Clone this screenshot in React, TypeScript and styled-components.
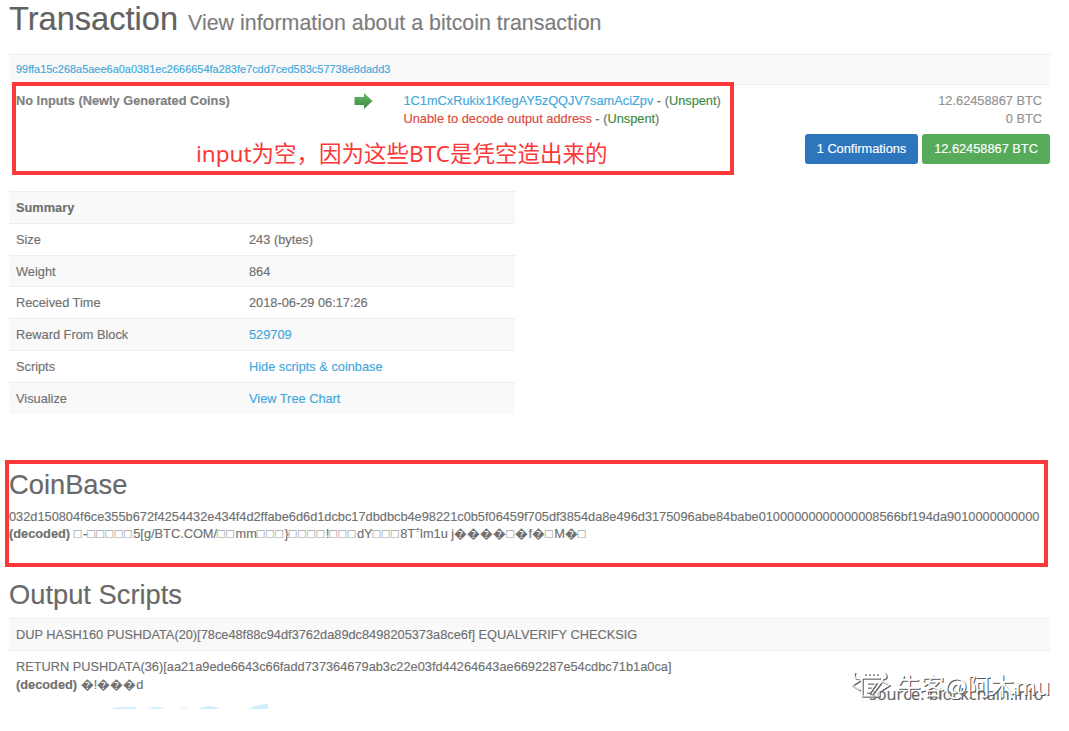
import styled, { createGlobalStyle } from "styled-components";

const GlobalStyle = createGlobalStyle`
  * {
    box-sizing: border-box;
  }
  body {
    margin: 0;
    background-color: #fff;
    color: #707070;
    font-family: "Liberation Sans", Arial, sans-serif;
    font-size: 12.79px;
    line-height: 17.7px;
    -webkit-text-stroke: 0.15px currentColor;
  }
`;

const Page = styled.div`
  position: relative;
  width: 1069px;
  height: 731px;
  padding-left: 9px;
  overflow: hidden;
  white-space: nowrap;
`;

const Title = styled.h1`
  height: 54px;
  margin: 0;
  font-size: 32.6px;
  font-weight: 400;
  line-height: 37px;
  color: #626262;
`;

const Subtitle = styled.small`
  margin-left: 1px;
  font-size: 21.4px;
  color: #7d7d7d;
`;

const Link = styled.a`
  color: #41a8db;
`;

const HashRow = styled.div`
  display: flex;
  align-items: center;
  width: 1041px;
  height: 31px;
  padding-left: 7px;
  background-color: #f9f9f9;
  border-top: 1px solid #eee;
  border-bottom: 1px solid #f0f0f0;
  font-size: 10.96px;
`;

const TxBody = styled.div`
  display: grid;
  grid-template-columns: 338px 49.5px 1fr auto;
  width: 1041px;
  height: 106px;
  padding: 7px 0 0 7px;
`;

const NoInputs = styled.strong`
  color: #808080;
`;

const Arrow = styled.svg`
  width: 19px;
  height: 18px;
`;

const Failed = styled.span`
  color: #dc4a3d;
`;

const Unspent = styled.span`
  color: #3c8a3e;
`;

const Amounts = styled.div`
  color: #919191;
  text-align: right;
`;

const Amount = styled.div`
  padding-right: 8px;
`;

const Buttons = styled.div`
  display: flex;
  gap: 4px;
  margin-top: 7px;
`;

const Button = styled.div<{ $color: string; $width: number }>`
  width: ${(props) => props.$width}px;
  height: 30px;
  border-radius: 3px;
  background-color: ${(props) => props.$color};
  color: #fff;
  text-align: center;
  line-height: 29px;
`;

const Summary = styled.div`
  width: 506px;
  margin-bottom: 55px;
`;

const SummaryRow = styled.div<{ $striped: boolean }>`
  display: grid;
  grid-template-columns: 233px 1fr;
  height: 31.8px;
  padding-left: 7px;
  border-top: 1px solid #eee;
  background-color: ${(props) => (props.$striped ? "#f9f9f9" : "#fff")};
  line-height: 31px;
`;

const Heading = styled.h2`
  margin: 0 0 7px;
  font-size: 27.3px;
  font-weight: 400;
  line-height: 32px;
  color: #696969;
`;

const CoinBase = styled.section`
  height: 110px;
`;

const Tofu = styled.span`
  color: #a5a5a5;
  letter-spacing: 1.5px;
`;

const Mark = styled.sup`
  font-size: 9px;
  line-height: 0;
`;

const Script = styled.div<{ $striped?: boolean }>`
  width: 1041px;
  padding: 7px;
  border-top: 1px solid #eee;
  background-color: ${(props) => (props.$striped ? "#f9f9f9" : "#fff")};
`;

const Outline = styled.div<{ $x: number; $y: number; $w: number; $h: number }>`
  position: absolute;
  left: ${(props) => props.$x}px;
  top: ${(props) => props.$y}px;
  width: ${(props) => props.$w}px;
  height: ${(props) => props.$h}px;
  border: 4px solid #fb3939;
`;

const Note = styled.div`
  position: absolute;
  left: 196px;
  top: 138px;
  color: #fb3939;
  font-family: "Noto Sans", "Noto Sans CJK SC", sans-serif;
  font-size: 22.5px;
  line-height: 32px;
  -webkit-text-stroke: 0;
`;

const CutLogo = styled.svg`
  position: absolute;
  left: 108px;
  top: 703px;
`;

const Source = styled.div`
  position: absolute;
  left: 869px;
  top: 684px;
  color: #666;
  font-family: "Open Sans", sans-serif;
  font-size: 16.3px;
  line-height: 20px;
`;

const Watermark = styled.div`
  position: absolute;
  left: 850px;
  top: 669px;
  display: flex;
  align-items: center;
  gap: 5px;
  color: #fff;
  font-family: "Noto Sans CJK SC", sans-serif;
  font-size: 23.7px;
  line-height: 32px;
  text-shadow: 1px 1px 0 #555;
  -webkit-text-stroke: 0;
`;

const summary = [
  { label: "Size", value: "243 (bytes)" },
  { label: "Weight", value: "864" },
  { label: "Received Time", value: "2018-06-29 06:17:26" },
  { label: "Reward From Block", value: "529709", link: true },
  { label: "Scripts", value: "Hide scripts & coinbase", link: true },
  { label: "Visualize", value: "View Tree Chart", link: true },
];

const decoded = "□-□□□□□5[g/BTC.COM/□□mm□□□}□□□□!□□□dY□□□8T";
const decodedEnd = "lm1u j����□�f�□M�□";

function Decoded({ text }: { text: string }) {
  return (
    <>
      {text
        .split(/(□+)/)
        .map((part, i) =>
          part.startsWith("□") ? <Tofu key={i}>{part}</Tofu> : part
        )}
    </>
  );
}

function App() {
  return (
    <Page>
      <GlobalStyle />
      <Title>
        Transaction{" "}
        <Subtitle>View information about a bitcoin transaction</Subtitle>
      </Title>
      <HashRow>
        <Link>
          99ffa15c268a5aee6a0a0381ec2666654fa283fe7cdd7ced583c57738e8dadd3
        </Link>
      </HashRow>
      <TxBody>
        <NoInputs>No Inputs (Newly Generated Coins)</NoInputs>
        <Arrow viewBox="0 0 19 18">
          <defs>
            <linearGradient id="arrow" x1="0" y1="0" x2="0" y2="1">
              <stop offset="0" stopColor="#6ab768" />
              <stop offset="1" stopColor="#39873d" />
            </linearGradient>
          </defs>
          <path d="M0.5 5H10V1L18.5 9L10 17V13H0.5Z" fill="url(#arrow)" />
        </Arrow>
        <div>
          <div>
            <Link>1C1mCxRukix1KfegAY5zQQJV7samAciZpv</Link> - (
            <Unspent>Unspent</Unspent>)
          </div>
          <div>
            <Failed>Unable to decode output address</Failed> - (
            <Unspent>Unspent</Unspent>)
          </div>
        </div>
        <Amounts>
          <Amount>12.62458867 BTC</Amount>
          <Amount>0 BTC</Amount>
          <Buttons>
            <Button $color="#2d76bd" $width={113}>
              1 Confirmations
            </Button>
            <Button $color="#57aa59" $width={128}>
              12.62458867 BTC
            </Button>
          </Buttons>
        </Amounts>
      </TxBody>
      <Summary>
        <SummaryRow $striped>
          <strong>Summary</strong>
        </SummaryRow>
        {summary.map((row, i) => (
          <SummaryRow key={row.label} $striped={i % 2 === 1}>
            <span>{row.label}</span>
            {row.link ? <Link>{row.value}</Link> : <span>{row.value}</span>}
          </SummaryRow>
        ))}
      </Summary>
      <CoinBase>
        <Heading>CoinBase</Heading>
        <div>
          032d150804f6ce355b672f4254432e434f4d2ffabe6d6d1dcbc17dbdbcb4e98221c0b5f06459f705df3854da8e496d3175096abe84babe01000000000000008566bf194da9010000000000
        </div>
        <div>
          <strong>(decoded)</strong> <Decoded text={decoded} />
          <Mark>÷</Mark>
          <Decoded text={decodedEnd} />
        </div>
      </CoinBase>
      <section>
        <Heading>Output Scripts</Heading>
        <Script $striped>
          DUP HASH160 PUSHDATA(20)[78ce48f88c94df3762da89dc8498205373a8ce6f]
          EQUALVERIFY CHECKSIG
        </Script>
        <Script>
          <div>
            RETURN
            PUSHDATA(36)[aa21a9ede6643c66fadd737364679ab3c22e03fd44264643ae6692287e54cdbc71b1a0ca]
          </div>
          <div>
            <strong>(decoded)</strong> �!���d
          </div>
        </Script>
      </section>
      <Outline $x={12} $y={82} $w={722} $h={93} />
      <Note>input为空，因为这些BTC是凭空造出来的</Note>
      <Outline $x={5} $y={460} $w={1043} $h={107} />
      <CutLogo width="162" height="6" viewBox="0 0 162 6">
        <path
          d="M1 6Q6 4 16 4H27L29 6ZM40 6Q48 2 57 6ZM70 6L76 5L82 6ZM91 6Q102 0 112 6ZM141 6Q148 1 160 1V6Z"
          fill="#d3eefa"
        />
      </CutLogo>
      <Source>source: blockchain.info</Source>
      <Watermark>
        <svg width="42" height="28" viewBox="0 0 42 28" fill="none">
          <g stroke="#666" strokeWidth="1.6" transform="translate(1 1)">
            <path d="M5 1Q2 7 9 8M34 1Q39 7 32 8M10 9L2 14L10 19M31 9L39 14L31 19M12 7V25H29V19M12 7H30M17 12H26L20 21H16M17 16H23M22 23L31 11" />
            <path d="M14 3H29" strokeDasharray="2 2" />
          </g>
          <g stroke="#fff" strokeWidth="1.2">
            <path d="M5 1Q2 7 9 8M34 1Q39 7 32 8M10 9L2 14L10 19M31 9L39 14L31 19M12 7V25H29V19M12 7H30M17 12H26L20 21H16M17 16H23M22 23L31 11" />
            <path d="M14 3H29" strokeDasharray="2 2" />
          </g>
        </svg>
        牛客@阿木mu
      </Watermark>
    </Page>
  );
}

export default App;
